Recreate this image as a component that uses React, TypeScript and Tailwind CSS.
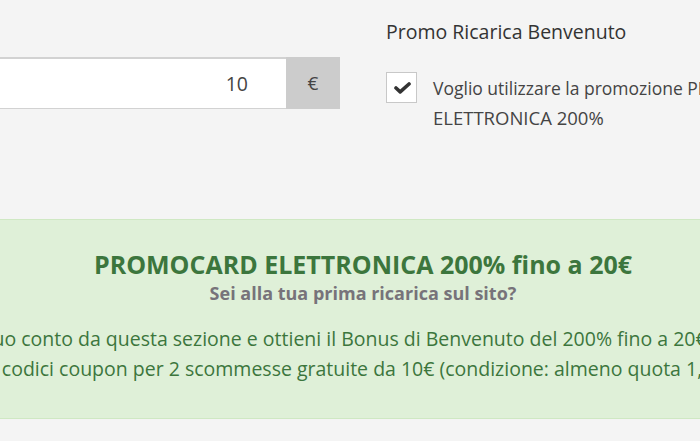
import React from "react";

export default function App() {
  return (
    <div
      className="w-[700px] h-[441px] overflow-hidden bg-[#f4f4f4] text-[#333]"
      style={{ fontFamily: '"Open Sans", "Liberation Sans", sans-serif' }}
    >
      <div className="flex h-[219px]">
        <div className="w-[340px] shrink-0 pt-[57px]">
          <div className="flex h-[52px]">
            <div className="flex-1 bg-white border-t-2 border-b border-[#d2d2d2] flex items-center justify-end pr-[38px] text-[19.5px] text-[#444]">
              10
            </div>
            <div className="w-[54px] bg-[#cccccc] flex items-center justify-center text-[19px] text-[#444]">
              €
            </div>
          </div>
        </div>
        <div className="pl-[46px] pt-[20px] flex-1 min-w-0">
          <div className="text-[19.5px] leading-[24px] text-[#333] whitespace-nowrap">Promo Ricarica Benvenuto</div>
          <div className="flex mt-[28px]">
            <div className="w-[31px] h-[31px] shrink-0 bg-white border border-[#c8c8c8] flex items-center justify-center">
              <svg width="17" height="12" viewBox="0 0 17 12" className="ml-[1px]">
                <path d="M2 6 L6.2 9.8 L15 2" fill="none" stroke="#333" strokeWidth="3.6" strokeLinecap="round" strokeLinejoin="round" />
              </svg>
            </div>
            <div className="ml-[16px] leading-[30px] text-[#444] whitespace-nowrap mt-[1px]">
              <div className="text-[17.5px]">Voglio utilizzare la promozione PROMOCARD</div>
              <div className="text-[18.5px]">ELETTRONICA 200%</div>
            </div>
          </div>
        </div>
      </div>
      <div className="ml-[-400px] w-[1526px] h-[200px] bg-[#dff0d8] border border-[#cfe8c3] text-center text-[#3c763d] pt-[28px]">
        <div className="text-[25px] leading-[32px] font-bold whitespace-nowrap">PROMOCARD ELETTRONICA 200% fino a 20€</div>
        <div className="text-[18px] leading-[24px] font-bold text-[#77737a] whitespace-nowrap mt-[1px]">Sei alla tua prima ricarica sul sito?</div>
        <div className="text-[19.5px] leading-[30px] whitespace-nowrap mt-[19px]">
          <div className="pr-[124px]">Ricarica il tuo conto da questa sezione e ottieni il Bonus di Benvenuto del 200% fino a 20€</div>
          <div className="pr-[44px]">più 2 codici coupon per 2 scommesse gratuite da 10€ (condizione: almeno quota 1,75)</div>
        </div>
      </div>
    </div>
  );
}
